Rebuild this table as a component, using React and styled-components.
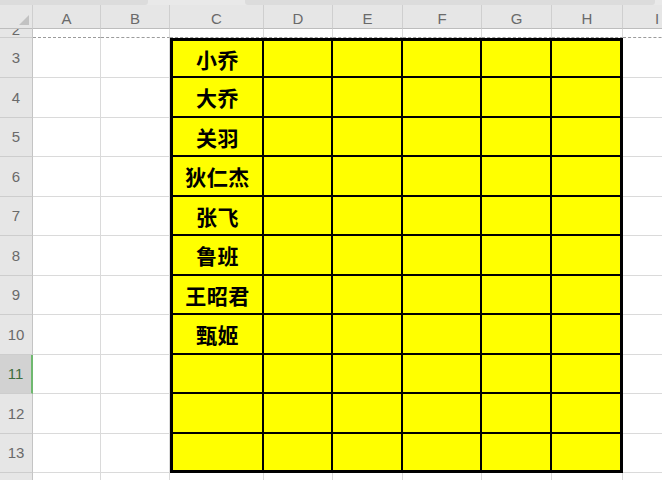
import React from "react";
import styled, { createGlobalStyle, css } from "styled-components";

const GlobalStyle = createGlobalStyle`
	html, body {
		margin: 0;
		padding: 0;
		background: #ffffff;
		overflow: hidden;
	}
	body {
		font-family: "Liberation Sans", Arial, sans-serif;
	}
`;

// column widths: row header, A..I
const COLS = "33px 68px 69px 94px 69px 70px 79px 70px 71px 69px";
const LETTERS = ["A", "B", "C", "D", "E", "F", "G", "H", "I"];
const ROW_HEIGHTS = [40, 40, 39, 40, 39, 40, 39, 40, 39, 40, 39];
const NAMES = ["小乔", "大乔", "关羽", "狄仁杰", "张飞", "鲁班", "王昭君", "甄姬", "", "", ""];

const Sheet = styled.div`
	width: 662px;
	height: 480px;
	overflow: hidden;
	display: flex;
	flex-direction: column;
	background: #ffffff;
	& > * {
		flex: none;
	}
`;

const TopStrip = styled.div`
	height: 5px;
	display: flex;
	background: #e9e9e9;
`;

const StripPart = styled.div`
	width: ${(p) => p.$w}px;
	background: ${(p) => (p.$dark ? "#dcdcdc" : "#e9e9e9")};
	border-bottom-right-radius: ${(p) => (p.$dark ? "3px" : "0")};
	border-bottom-left-radius: ${(p) => (p.$round ? "3px" : "0")};
`;

const Row = styled.div`
	display: grid;
	grid-template-columns: ${COLS};
	height: ${(p) => p.$h}px;
`;

const ColHead = styled.div`
	background: #e6e6e6;
	border-right: 1px solid #cfcfcf;
	border-bottom: 1px solid #bdbdbd;
	display: flex;
	align-items: center;
	justify-content: center;
	color: #6a6a6a;
	font-size: 15px;
	padding-top: 4px;
	box-sizing: border-box;
`;

const Corner = styled(ColHead)`
	position: relative;
	&::after {
		content: "";
		position: absolute;
		right: 3px;
		bottom: 3px;
		width: 0;
		height: 0;
		border-left: 10px solid transparent;
		border-bottom: 10px solid #c2c2c2;
	}
`;

const RowHead = styled.div`
	background: ${(p) => (p.$active ? "#d2d2d2" : "#e6e6e6")};
	border-right: ${(p) => (p.$active ? "2px solid #6fb86f" : "1px solid #c4c4c4")};
	border-bottom: 1px solid #cdcdcd;
	display: flex;
	align-items: ${(p) => (p.$clip ? "flex-end" : "center")};
	justify-content: center;
	color: ${(p) => (p.$active ? "#3d6d3d" : "#6a6a6a")};
	font-size: 15px;
	box-sizing: border-box;
	overflow: hidden;
	line-height: 18px;
`;

const Clipped = styled.span`
	margin-bottom: -2px;
	line-height: 18px;
`;

const Cell = styled.div`
	box-sizing: border-box;
	border-right: 1px solid #dadada;
	border-bottom: ${(p) => (p.$dashed ? "1px dashed #9c9c9c" : "1px solid #dadada")};
	background: #ffffff;
`;

const YellowCell = styled.div`
	box-sizing: border-box;
	background: #ffff00;
	border-right: 2px solid #000;
	border-bottom: 2px solid #000;
	display: flex;
	align-items: center;
	justify-content: center;
	font-family: "Noto Sans CJK SC", "Noto Sans", sans-serif;
	font-weight: 700;
	font-size: 21px;
	color: #000;
	letter-spacing: 0.5px;
	${(p) =>
		p.$first &&
		css`
			border-left: 3px solid #000;
		`}
	${(p) =>
		p.$last &&
		css`
			border-right: 3px solid #000;
		`}
	${(p) =>
		p.$top &&
		css`
			border-top: 3px solid #000;
		`}
	${(p) =>
		p.$bottom &&
		css`
			border-bottom: 3px solid #000;
		`}
`;

const App = () => {
	return (
		<>
			<GlobalStyle />
			<Sheet>
				<TopStrip>
					<StripPart $w={148} $dark />
					<StripPart $w={97} />
					<StripPart $w={410} $dark $round />
				</TopStrip>

				<Row $h={24}>
					<Corner />
					{LETTERS.map((l) => (
						<ColHead key={l}>{l}</ColHead>
					))}
				</Row>

				{/* partially scrolled row */}
				<Row $h={9}>
					<RowHead $clip>
						<Clipped>2</Clipped>
					</RowHead>
					{LETTERS.map((l) => (
						<Cell key={l} $dashed />
					))}
				</Row>

				{ROW_HEIGHTS.map((h, i) => {
					const rowNum = i + 3;
					const top = i === 0;
					const bottom = i === ROW_HEIGHTS.length - 1;
					return (
						<Row key={rowNum} $h={h}>
							<RowHead $active={rowNum === 11}>{rowNum}</RowHead>
							<Cell />
							<Cell />
							{["C", "D", "E", "F", "G", "H"].map((c, ci) => (
								<YellowCell
									key={c}
									$first={ci === 0}
									$last={ci === 5}
									$top={top}
									$bottom={bottom}>
									{ci === 0 ? NAMES[i] : ""}
								</YellowCell>
							))}
							<Cell />
						</Row>
					);
				})}

				<Row $h={10}>
					<RowHead />
					{LETTERS.map((l) => (
						<Cell key={l} />
					))}
				</Row>
			</Sheet>
		</>
	);
};

export default App;
